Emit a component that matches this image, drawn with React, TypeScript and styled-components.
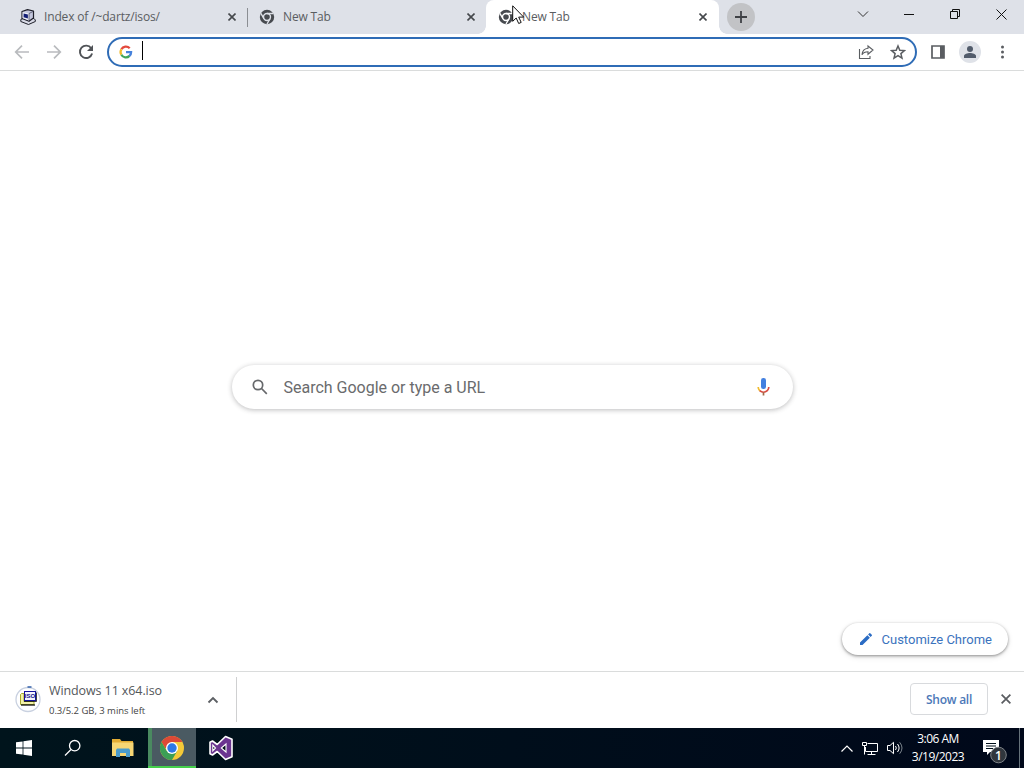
import styled, { createGlobalStyle } from "styled-components";

const uiFont = `"Open Sans", "Noto Sans", sans-serif`;
const webFont = `Roboto, "Liberation Sans", sans-serif`;

const colors = {
  strip: "#dee1e8",
  icon: "#5a5d61",
  text: "#5a5d61",
  blue: "#2f6cb6",
  line: "#dadcdc",
  taskbar: "#000f1a",
};

const GlobalStyle = createGlobalStyle`
  * {
    box-sizing: border-box;
  }
  body {
    margin: 0;
    overflow: hidden;
    font-family: ${uiFont};
  }
  svg {
    display: block;
    flex: none;
  }
`;

const Screen = styled.div`
  position: relative;
  width: 1024px;
  height: 768px;
  display: flex;
  flex-direction: column;
  background: #fff;
`;

const TabStrip = styled.div`
  display: flex;
  height: 34px;
  padding-left: 8px;
  background: ${colors.strip};
`;

const TabBox = styled.div<{ $active?: boolean; $divider?: boolean }>`
  position: relative;
  display: flex;
  align-items: center;
  width: ${(p) => (p.$active ? 233 : 239)}px;
  height: 34px;
  padding: 0 ${(p) => (p.$active ? 12 : 11)}px 0 12px;
  border-radius: 8px 8px 0 0;
  background: ${(p) => (p.$active ? "#fff" : "transparent")};

  &::after {
    content: "";
    display: ${(p) => (p.$divider ? "block" : "none")};
    position: absolute;
    right: -1px;
    top: 8px;
    width: 1px;
    height: 19px;
    background: #8b8e93;
  }
`;

/* The little outward curves at the foot of the active tab */
const Flare = styled.i<{ $side: "left" | "right" }>`
  position: absolute;
  bottom: 0;
  ${(p) => p.$side}: -8px;
  width: 8px;
  height: 8px;
  background: radial-gradient(
    circle at ${(p) => (p.$side === "left" ? "0 0" : "100% 0")},
    transparent 7.5px,
    #fff 8px
  );
`;

const TabTitle = styled.span`
  flex: 1;
  margin-left: 8px;
  font-size: 12px;
  line-height: 16px;
  letter-spacing: -0.15px;
  white-space: nowrap;
  color: ${colors.text};
`;

const NewTab = styled.div`
  display: flex;
  align-items: center;
  justify-content: center;
  width: 28px;
  height: 28px;
  margin: 3px 0 0 8px;
  border-radius: 50%;
  background: #c2c3c6;
`;

const WindowButtons = styled.div`
  display: flex;
  height: 28px;
  margin-left: auto;
`;

const WindowButton = styled.div`
  display: flex;
  align-items: center;
  justify-content: center;
  width: 46px;
`;

const Toolbar = styled.div`
  display: flex;
  align-items: center;
  height: 37px;
  padding: 0 14px 1px 14px;
  border-bottom: 1px solid ${colors.line};
`;

const NavIcons = styled.div`
  display: flex;
  gap: 16px;
  margin-right: 13px;
`;

const Omnibox = styled.div`
  display: flex;
  align-items: center;
  width: 810px;
  height: 30px;
  padding: 0 9px 0 10px;
  border: 2px solid ${colors.blue};
  border-radius: 15px;
`;

const Caret = styled.span`
  width: 1px;
  height: 19px;
  margin: -2px auto 0 9px;
  background: #000;
`;

const OmniActions = styled.div`
  display: flex;
  gap: 16px;
`;

const ToolbarActions = styled.div`
  display: flex;
  align-items: center;
  margin-left: auto;
`;

const Avatar = styled.div`
  display: flex;
  align-items: center;
  justify-content: center;
  width: 22px;
  height: 22px;
  margin: 0 13px 0 14px;
  border-radius: 50%;
  background: #dfe2e8;
`;

const Page = styled.main`
  display: flex;
  flex-direction: column;
  height: 600px;
  padding: 294px 16px 16px 0;
`;

const SearchBox = styled.div`
  display: flex;
  align-items: center;
  width: 561px;
  height: 44px;
  margin-left: 232px;
  padding: 0 20px 0 18px;
  border-radius: 22px;
  box-shadow: 0 1px 5px rgba(32, 33, 36, 0.3);
  font-family: ${webFont};
`;

const Placeholder = styled.span`
  flex: 1;
  margin-left: 13.5px;
  font-size: 16px;
  letter-spacing: -0.01px;
  color: #6a6b6d;
`;

const CustomizeButton = styled.div`
  display: flex;
  align-items: center;
  align-self: flex-end;
  width: 166px;
  height: 32px;
  margin-top: auto;
  padding-left: 16px;
  gap: 7.5px;
  border-radius: 16px;
  box-shadow: 0 1px 3px rgba(0, 0, 0, 0.4), 0 2px 6px rgba(0, 0, 0, 0.1);
  font-family: ${webFont};
  font-size: 13px;
  white-space: nowrap;
  color: #3b73bd;
`;

const DownloadShelf = styled.div`
  display: flex;
  align-items: center;
  height: 57px;
  padding: 0 13px 2px 0;
  border-top: 1px solid ${colors.line};
`;

const DownloadItem = styled.div`
  display: flex;
  align-items: center;
  width: 237px;
  height: 45px;
  margin-top: 1px;
  padding: 0 17px 0 15px;
  border-right: 1px solid #cfd0d1;
`;

const DownloadText = styled.div`
  display: flex;
  flex-direction: column;
  flex: 1;
  margin: 2px 0 0 8px;
  white-space: nowrap;
`;

const FileName = styled.span`
  font-size: 12.5px;
  line-height: 20px;
  letter-spacing: -0.1px;
  color: #54575b;
`;

const FileStatus = styled.span`
  font-size: 9.5px;
  line-height: 20px;
  letter-spacing: -0.03px;
  color: #444;
`;

const ShowAll = styled.div`
  display: flex;
  align-items: center;
  justify-content: center;
  width: 78px;
  height: 32px;
  margin: 0 13px 0 auto;
  border: 1px solid #d8dadd;
  border-radius: 4px;
  font-size: 12px;
  font-weight: 600;
  letter-spacing: -0.25px;
  color: #4c78b8;
`;

const Taskbar = styled.footer`
  display: flex;
  height: 40px;
  background: linear-gradient(90deg, #00141c, #00081a);
  color: #fff;
`;

const TaskButton = styled.div<{ $active?: boolean; $width?: number }>`
  display: flex;
  align-items: center;
  justify-content: center;
  width: ${(p) => p.$width ?? 48}px;
  background: ${(p) =>
    p.$active
      ? "linear-gradient(#45cf4b, #45cf4b) 0 100% / 100% 2px no-repeat, linear-gradient(90deg, #4a8a60 4px, #4a5a62 4px)"
      : "none"};
`;

const Tray = styled.div`
  display: flex;
  align-items: center;
  margin-left: auto;
`;

const TrayIcons = styled.div`
  display: flex;
  align-items: center;
  gap: 8px;
`;

const Clock = styled.div`
  display: flex;
  flex-direction: column;
  align-items: center;
  width: 54px;
  margin: 0 17px 0 7px;
  font-size: 12px;
  line-height: 18px;
  letter-spacing: -0.5px;
  white-space: nowrap;
`;

const ShowDesktop = styled.div`
  width: 5px;
  height: 40px;
  margin-left: 11px;
  border-left: 1px solid #66727b;
`;

const Pointer = styled.div`
  position: absolute;
  left: 512px;
  top: 5px;
`;

function CloseIcon({ size = 8, color = "#45484c", stroke = 1.6 }) {
  return (
    <svg width={size} height={size} viewBox="0 0 8 8" stroke={color} strokeWidth={stroke}>
      <path d="M.5.5l7 7M7.5.5l-7 7" />
    </svg>
  );
}

function ChromeMono({ gap = colors.strip }) {
  return (
    <svg width="16" height="16" viewBox="0 0 16 16">
      <circle cx="8" cy="8" r="7.2" fill="#474a4f" />
      <g fill="none" stroke={gap} strokeWidth="1.4">
        <circle cx="8" cy="8" r="3.5" />
        <path d="M8 4.5h6.2M4.97 9.75L1.9 4.4M11.03 9.75L8 15" />
      </g>
    </svg>
  );
}

function ComputerIcon() {
  return (
    <svg width="16" height="16" viewBox="0 0 16 16" strokeLinejoin="round">
      <path d="M.8 10.5L4 9l10 .5 1.3 1.5v1.5L8.5 15.5.8 12.5z" fill="#d8dae6" stroke="#1d1e28" />
      <path d="M2 2.5L7.500.6l6 1.400v7L9 12.300 2 9.500z" fill="#c3c6dc" stroke="#1d1e28" strokeWidth="1.2" />
      <path d="M2.600 3L9 4.500v7L2.600 9z" fill="#eef0f7" />
      <path d="M3.600 4.400l4.300 1v4L3.600 8.200z" fill="#121d74" />
      <path d="M9 4.500v7M9 4.500l4-2" fill="none" stroke="#3b3d52" strokeWidth=".7" />
    </svg>
  );
}

function ArrowIcon({ flip }: { flip?: boolean }) {
  return (
    <svg width="16" height="16" viewBox="0 0 16 16">
      <path
        d="M15 8H2M8 1.7L1.7 8 8 14.3"
        transform={flip ? "translate(16 0) scale(-1 1)" : undefined}
        fill="none"
        stroke="#b9bbbe"
        strokeWidth="1.7"
      />
    </svg>
  );
}

function ReloadIcon() {
  return (
    <svg width="16" height="16" viewBox="0 0 16 16">
      <path d="M13.2 4.2A6.2 6.2 0 1 0 14.1 9.5" fill="none" stroke="#505357" strokeWidth="1.9" />
      <path d="M15 1v6H9z" fill="#505357" />
    </svg>
  );
}

function GoogleIcon() {
  return (
    <svg width="14" height="14" viewBox="0 0 14 14" fill="none" strokeWidth="2.3">
      <path d="M2.4 4.3A5.1 5.1 0 0 1 10.7 3.2" stroke="#e34a3d" />
      <path d="M2.4 9.7a5.1 5.1 0 0 1 0-5.4" stroke="#f2b928" />
      <path d="M10.5 10.9a5.1 5.1 0 0 1-8.1-1.2" stroke="#3fa65a" />
      <path d="M7 7.1h5.1a5.1 5.1 0 0 1-1.7 3.9" stroke="#4682dc" />
    </svg>
  );
}

function ShareIcon() {
  return (
    <svg width="16" height="16" viewBox="0 0 16 16" fill="none" stroke={colors.icon} strokeWidth="1.1">
      <path d="M1.5 5v9.5h10.5V12" />
      <path d="M10 2l5 4-5 4.2V7.8C7 7.8 5.2 8.7 4 10.8 4.3 7.2 6.3 4.7 10 4.3z" />
    </svg>
  );
}

function StarIcon() {
  return (
    <svg width="16" height="16" viewBox="0 0 16 16" fill="none" stroke={colors.icon} strokeWidth="1.5">
      <path d="M8 2l1.8 4.2 4.6.4-3.5 3 1.1 4.5L8 11.7l-4 2.4 1.1-4.5-3.5-3 4.6-.4z" />
    </svg>
  );
}

function SidePanelIcon() {
  return (
    <svg width="14" height="14" viewBox="0 0 14 14">
      <path d="M1 1h12v12H1z" fill="none" stroke={colors.icon} strokeWidth="1.7" />
      <path d="M9 1h4v12H9z" fill={colors.icon} />
    </svg>
  );
}

function PersonIcon() {
  return (
    <svg width="14" height="14" viewBox="0 0 14 14" fill="#525c6b">
      <circle cx="7" cy="4" r="3" />
      <path d="M1 13v-2c0-2 3.5-3 6-3s6 1 6 3v2z" />
    </svg>
  );
}

function MenuIcon() {
  return (
    <svg width="16" height="16" viewBox="0 0 16 16" fill={colors.icon}>
      <circle cx="8.5" cy="3" r="1.5" />
      <circle cx="8.5" cy="8" r="1.5" />
      <circle cx="8.5" cy="13" r="1.5" />
    </svg>
  );
}

function MicIcon() {
  return (
    <svg width="19" height="18" viewBox="0 0 19 18" fill="none">
      <rect x="7" y="0" width="5" height="11" rx="2.3" fill="#4380e0" />
      <path d="M4.2 9c0 1.7.6 2.900 1.600 3.800" stroke="#f0bb2e" strokeWidth="1.7" />
      <path d="M5.7 12.6c2.200 2 5.400 2 7.600 0 1-.9 1.500-2.100 1.500-3.600" stroke="#d84c40" strokeWidth="1.7" />
      <path d="M9.5 14.3v3.200" stroke="#a16c48" strokeWidth="1.7" />
    </svg>
  );
}

function IsoIcon() {
  return (
    <svg width="26" height="30" viewBox="0 0 26 30">
      <circle cx="13" cy="14.5" r="12" fill="#fff" stroke="#c9d1e0" strokeWidth="1.3" />
      <path d="M12.500 2h4" stroke="#3e69b0" strokeWidth="1.6" />
      <path d="M6.5 8.5H9v8h10v3H5.500v-10z" fill="#f4f2a8" stroke="#a5aa2b" />
      <path d="M6 20h14" stroke="#111" strokeWidth="1.3" />
      <rect x="9.500" y="6.500" width="11" height="9" fill="#f2f3ff" stroke="#14149a" />
      <text
        x="15"
        y="13.3"
        fontFamily="Liberation Sans, sans-serif"
        fontSize="6"
        fontWeight="700"
        textAnchor="middle"
        fill="#101084"
      >
        ISO
      </text>
      <path d="M9 16.500h12.500v-9" fill="none" stroke="#111" strokeWidth=".8" />
    </svg>
  );
}

function WindowsIcon() {
  return (
    <svg width="16" height="16" viewBox="0 0 16 16" fill="#fff">
      <path d="M0 2.3l6.6-.9v6.2H0zM7.400 1.300L16 0v7.600H7.400zM0 8.400h6.600v6.200L0 13.700zM7.400 8.400H16V16l-8.600-1.200z" />
    </svg>
  );
}

function ExplorerIcon() {
  return (
    <svg width="22" height="18" viewBox="0 0 22 18">
      <path d="M0 0h8l1.500 2H21v3H0z" fill="#e2ac34" />
      <path d="M0 3.500h21.500V17H0z" fill="#f6d674" />
      <path d="M4 18v-7l1-1.500h12l1 1.500v7h-4v-4H8v4z" fill="#4a9bcb" />
    </svg>
  );
}

function ChromeIcon() {
  return (
    <svg width="24" height="24" viewBox="0 0 24 24">
      <circle cx="12" cy="12" r="12" fill="#f4c938" />
      <path d="M1.600 6A12 12 0 0 1 22.400 6H12v6H5.100z" fill="#dc4937" />
      <path d="M1.600 6A12 12 0 0 0 12 24l5.200-9H6.800z" fill="#3c9f55" />
      <circle cx="12" cy="12" r="6" fill="#fff" />
      <circle cx="12" cy="12" r="4.700" fill="#2e78e6" />
    </svg>
  );
}

function VisualStudioIcon() {
  return (
    <svg width="26" height="26" viewBox="0 0 26 26">
      <path
        d="M17.500 1.500l6.500 2.800v17.400l-6.500 2.800-8.300-8L4.500 20 2 18.700V7.300L4.500 6l4.700 3.500z"
        fill="#6b3590"
        stroke="#fff"
        strokeWidth="1.6"
        strokeLinejoin="round"
      />
      <path d="M18 9v8l-4.700-4zM4.800 10.200L7.500 13l-2.700 2.800z" fill="#00111a" stroke="#fff" strokeWidth="1.1" />
    </svg>
  );
}

function NetworkIcon() {
  return (
    <svg width="17" height="15" viewBox="0 0 17 15" fill="none" stroke="#fff">
      <path d="M5.500 2.500h10v8h-12V6M9.500 10.500v3M5.500 13.500h8" />
      <path d="M.5 1.500h4v3h-4zM2.500 4.500v9" />
    </svg>
  );
}

function VolumeIcon() {
  return (
    <svg width="17" height="14" viewBox="0 0 17 14" fill="none" stroke="#fff">
      <path d="M.5 4.500H3l3.500-3.200v11.400L3 9.500H.5zM8.500 5q1.600 2 0 4M10.500 3q3.200 4 0 8" />
      <path d="M12.700 1.300q4.600 5.700 0 11.400" stroke="#7c858c" />
    </svg>
  );
}

function NotificationIcon() {
  return (
    <svg width="26" height="34" viewBox="0 0 26 34">
      <path d="M1 9h16v12H8l-3 3v-3H1z" fill="#fff" />
      <path d="M4 12.500h10M4 15h10M4 17.500h7" stroke={colors.taskbar} />
      <circle cx="16.5" cy="24" r="7.800" fill="#30363d" stroke="#7d8287" />
      <text
        x="16.5"
        y="28.5"
        fontFamily="Open Sans, sans-serif"
        fontSize="12"
        fontWeight="600"
        textAnchor="middle"
        fill="#fff"
      >
        1
      </text>
    </svg>
  );
}

export default function App() {
  return (
    <Screen>
      <GlobalStyle />
      <TabStrip>
        <TabBox $divider>
          <ComputerIcon />
          <TabTitle>Index of /~dartz/isos/</TabTitle>
          <CloseIcon />
        </TabBox>
        <TabBox>
          <ChromeMono />
          <TabTitle>New Tab</TabTitle>
          <CloseIcon />
        </TabBox>
        <TabBox $active>
          <Flare $side="left" />
          <ChromeMono gap="#fff" />
          <TabTitle>New Tab</TabTitle>
          <CloseIcon />
          <Flare $side="right" />
        </TabBox>
        <NewTab>
          <svg width="12" height="12" viewBox="0 0 12 12" stroke="#3f4145" strokeWidth="1.8">
            <path d="M6 0v12M0 6h12" />
          </svg>
        </NewTab>
        <WindowButtons>
          <WindowButton>
            <svg width="12" height="8" viewBox="0 0 12 8" fill="none" stroke="#333">
              <path d="M1 1.5l5 5 5-5" />
            </svg>
          </WindowButton>
          <WindowButton>
            <svg width="10" height="2" viewBox="0 0 10 2">
              <path d="M0 1.5h10" stroke="#111" />
            </svg>
          </WindowButton>
          <WindowButton>
            <svg width="10" height="10" viewBox="0 0 10 10" fill="none" stroke="#111">
              <path d="M.5 2.5h7v7h-7zM2.5 2.5v-2h7v7h-2" />
            </svg>
          </WindowButton>
          <WindowButton>
            <svg width="11" height="11" viewBox="0 0 11 11" stroke="#111">
              <path d="M.5.5l10 10M10.5.5l-10 10" />
            </svg>
          </WindowButton>
        </WindowButtons>
      </TabStrip>

      <Toolbar>
        <NavIcons>
          <ArrowIcon />
          <ArrowIcon flip />
          <ReloadIcon />
        </NavIcons>
        <Omnibox>
          <GoogleIcon />
          <Caret />
          <OmniActions>
            <ShareIcon />
            <StarIcon />
          </OmniActions>
        </Omnibox>
        <ToolbarActions>
          <SidePanelIcon />
          <Avatar>
            <PersonIcon />
          </Avatar>
          <MenuIcon />
        </ToolbarActions>
      </Toolbar>

      <Page>
        <SearchBox>
          <svg width="20" height="20" viewBox="0 0 20 20" fill="none" stroke="#66686b" strokeWidth="1.7">
            <circle cx="8" cy="8" r="4.7" />
            <path d="M11.5 11.5l5.300 5.300" />
          </svg>
          <Placeholder>Search Google or type a URL</Placeholder>
          <MicIcon />
        </SearchBox>
        <CustomizeButton>
          <svg width="16" height="16" viewBox="0 0 24 24" fill="#2b6cc4">
            <path d="M3 17.25V21h3.75L17.81 9.94l-3.75-3.75L3 17.25zM20.71 7.04a1 1 0 0 0 0-1.410l-2.340-2.340a1 1 0 0 0-1.410 0l-1.830 1.830 3.750 3.750 1.830-1.830z" />
          </svg>
          Customize Chrome
        </CustomizeButton>
      </Page>

      <DownloadShelf>
        <DownloadItem>
          <IsoIcon />
          <DownloadText>
            <FileName>Windows 11 x64.iso</FileName>
            <FileStatus>0.3/5.2 GB, 3 mins left</FileStatus>
          </DownloadText>
          <svg width="12" height="8" viewBox="0 0 12 8" fill="none" stroke="#5c5f63" strokeWidth="1.8">
            <path d="M1.5 6.5L6 2l4.5 4.5" />
          </svg>
        </DownloadItem>
        <ShowAll>Show all</ShowAll>
        <CloseIcon size={10} color="#5a5d61" stroke={1.4} />
      </DownloadShelf>

      <Taskbar>
        <TaskButton>
          <WindowsIcon />
        </TaskButton>
        <TaskButton $width={49}>
          <svg width="18" height="18" viewBox="0 0 18 18" fill="none" stroke="#fff" strokeWidth="1.3">
            <circle cx="10.7" cy="6.7" r="5.2" />
            <path d="M7 10.5L1 16.5" />
          </svg>
        </TaskButton>
        <TaskButton $width={51}>
          <ExplorerIcon />
        </TaskButton>
        <TaskButton $active>
          <ChromeIcon />
        </TaskButton>
        <TaskButton $width={50}>
          <VisualStudioIcon />
        </TaskButton>
        <Tray>
          <TrayIcons>
            <svg width="14" height="9" viewBox="0 0 14 9" fill="none" stroke="#fff" strokeWidth="1.2">
              <path d="M1.5 7.5L7 2l5.500 5.500" />
            </svg>
            <NetworkIcon />
            <VolumeIcon />
          </TrayIcons>
          <Clock>
            <span>3:06 AM</span>
            <span>3/19/2023</span>
          </Clock>
          <NotificationIcon />
          <ShowDesktop />
        </Tray>
      </Taskbar>

      <Pointer>
        <svg width="13" height="20" viewBox="0 0 13 20">
          <path
            d="M.7.8v15.500l3.500-3.300 2.500 5.500 2.500-1.100-2.500-5.300h5z"
            fill="#fff"
            stroke="#111"
            strokeLinejoin="round"
          />
        </svg>
      </Pointer>
    </Screen>
  );
}
